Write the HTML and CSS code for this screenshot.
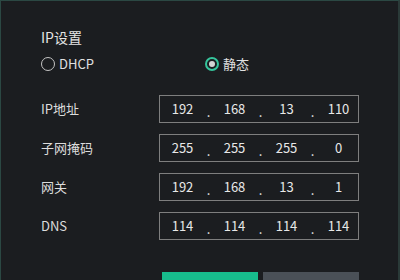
FILE: index.html
```html
<!DOCTYPE html>
<html lang="zh-CN">
<head>
<meta charset="utf-8">
<link rel="stylesheet" href="styles.css">
</head>
<body>
<div class="panel">
  <div class="title">IP设置</div>
  <div class="radios">
    <label class="radio"><span class="circle"></span><span class="rtext">DHCP</span></label>
    <label class="radio checked"><span class="circle"><span class="inner"></span></span><span class="rtext">静态</span></label>
  </div>
  <div class="rows">
    <div class="label">IP地址</div>
    <div class="ipbox"><span class="seg">192</span><span class="dot">.</span><span class="seg">168</span><span class="dot">.</span><span class="seg">13</span><span class="dot">.</span><span class="seg">110</span></div>
    <div class="label">子网掩码</div>
    <div class="ipbox"><span class="seg">255</span><span class="dot">.</span><span class="seg">255</span><span class="dot">.</span><span class="seg">255</span><span class="dot">.</span><span class="seg">0</span></div>
    <div class="label">网关</div>
    <div class="ipbox"><span class="seg">192</span><span class="dot">.</span><span class="seg">168</span><span class="dot">.</span><span class="seg">13</span><span class="dot">.</span><span class="seg">1</span></div>
    <div class="label">DNS</div>
    <div class="ipbox"><span class="seg">114</span><span class="dot">.</span><span class="seg">114</span><span class="dot">.</span><span class="seg">114</span><span class="dot">.</span><span class="seg">114</span></div>
  </div>
  <div class="buttons">
    <div class="btn ok"></div>
    <div class="btn cancel"></div>
  </div>
</div>
</body>
</html>
```
FILE: styles.css
```css
html, body {
  margin: 0;
  padding: 0;
  background: #1b1d20;
  overflow: hidden;
}
body {
  width: 400px;
  height: 280px;
  font-family: "Noto Sans CJK SC", "Noto Sans", sans-serif;
  color: #dcdcdc;
}
.panel {
  box-sizing: border-box;
  width: 400px;
  height: 280px;
  overflow: hidden;
  border-top: 1px solid #2b4843;
  border-left: 1px solid #2b4843;
  border-right: 2px solid #2a3a38;
  padding: 26px 0 0 40px;
  background: #1b1d20;
}
.title {
  font-size: 14px;
  line-height: 20px;
  color: #e4e4e4;
}
.radios {
  display: flex;
  margin-top: 9px;
  height: 16px;
  align-items: center;
}
.radio {
  display: flex;
  align-items: center;
  font-size: 13px;
  line-height: 16px;
  color: #e0e0e0;
  width: 164px;
}
.circle {
  box-sizing: border-box;
  width: 14px;
  height: 14px;
  border-radius: 50%;
  border: 1.5px solid #c4c4c4;
  display: flex;
  align-items: center;
  justify-content: center;
  margin-right: 4px;
}
.checked .circle {
  border: 2px solid #35c49c;
}
.inner {
  width: 6px;
  height: 6px;
  border-radius: 50%;
  background: #d4d4d4;
}
.rows {
  display: grid;
  grid-template-columns: 118px 200px;
  row-gap: 11px;
  margin-top: 23px;
}
.label {
  font-size: 13px;
  line-height: 28px;
  height: 28px;
  color: #dcdcdc;
}
.ipbox {
  box-sizing: border-box;
  height: 28px;
  border: 1px solid #7e7e7e;
  display: grid;
  grid-template-columns: 41px 11px 41px 11px 41px 11px 41px;
  padding-left: 2px;
  font-size: 13px;
  color: #e8e8e8;
}
.seg {
  text-align: center;
  line-height: 26px;
}
.dot {
  text-align: center;
  line-height: 20px;
  align-self: end;
}
.buttons {
  display: flex;
  gap: 5px;
  margin-top: 32px;
  margin-left: 121px;
}
.btn {
  width: 96px;
  height: 8px;
}
.ok {
  background: #17bd8d;
}
.cancel {
  background: #4a5057;
}
```
